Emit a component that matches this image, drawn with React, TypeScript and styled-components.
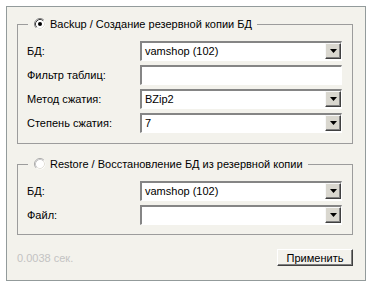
import React from 'react';
import styled, { createGlobalStyle } from 'styled-components';

const Global = createGlobalStyle`
  html, body { margin: 0; padding: 0; background: #ffffff; }
  body {
    font-family: "Liberation Sans", Arial, sans-serif;
    font-size: 11px;
    color: #000000;
  }
`;

const Panel = styled.div`
  box-sizing: border-box;
  margin: 6px;
  width: 360px;
  height: 275px;
  border: 1px solid #939b9b;
  background: #f3f2ec;
  padding: 17px 12px 0 10px;
  display: flex;
  flex-direction: column;
`;

const Group = styled.div<{ $gapTop?: number; $padBottom: number }>`
  position: relative;
  border: 1px solid #9c9c9c;
  margin-top: ${(p) => p.$gapTop ?? 0}px;
  padding: 16px 10px ${(p) => p.$padBottom}px 9px;
  display: flex;
  flex-direction: column;
  gap: 4px;
`;

const Legend = styled.div`
  position: absolute;
  top: -8px;
  left: 10px;
  height: 14px;
  padding: 0 5px 0 6px;
  background: #f3f2ec;
  display: flex;
  align-items: center;
  gap: 4px;
  line-height: 14px;
  white-space: nowrap;
`;

const Row = styled.div`
  display: grid;
  grid-template-columns: 113px 1fr;
  align-items: center;
  height: 20px;
`;

const Label = styled.span`
  white-space: nowrap;
`;

const Field = styled.div`
  box-sizing: border-box;
  height: 20px;
  background: #ffffff;
  border-style: solid;
  border-width: 2px 1px 1px 2px;
  border-color: #858585 #ffffff #ffffff #858585;
  display: flex;
  align-items: stretch;
`;

const FieldText = styled.span`
  flex: 1;
  padding-left: 3px;
  line-height: 17px;
  white-space: nowrap;
  overflow: hidden;
`;

const DropButton = styled.span`
  box-sizing: border-box;
  width: 16px;
  height: 16px;
  margin-bottom: 1px;
  background: #d9d7cf;
  border-style: solid;
  border-width: 1px;
  border-color: #f8f8f8 #404040 #404040 #f8f8f8;
  box-shadow: inset -1px -1px 0 #808080;
  display: flex;
  align-items: center;
  justify-content: center;
`;

const Footer = styled.div`
  margin-top: 14px;
  display: flex;
  justify-content: space-between;
  align-items: center;
  height: 17px;
`;

const Status = styled.span`
  color: #c3c3c3;
`;

const ApplyButton = styled.button`
  box-sizing: border-box;
  width: 76px;
  height: 17px;
  padding: 0;
  font: inherit;
  color: #000;
  background: #f3f2ec;
  border-style: solid;
  border-width: 1px;
  border-color: #ffffff #404040 #404040 #ffffff;
  box-shadow: inset -1px -1px 0 #808080;
  line-height: 14px;
`;

const Arrow = () => (
  <svg width="7" height="4" viewBox="0 0 7 4">
    <polygon points="0,0 7,0 3.5,4" fill="#000" />
  </svg>
);

const Radio = ({ checked }: { checked?: boolean }) => (
  <svg width="12" height="12" viewBox="0 0 12 12">
    <circle cx="6" cy="6" r="5.5" fill="#fff" />
    <path d="M2.11 9.89 A5.5 5.5 0 0 1 9.89 2.11" fill="none" stroke={checked ? '#808080' : '#a8a8a8'} strokeWidth="1" />
    <path d="M2.82 9.18 A4.5 4.5 0 0 1 9.18 2.82" fill="none" stroke={checked ? '#404040' : '#c8c8c8'} strokeWidth="1" />
    <path d="M9.18 2.82 A4.5 4.5 0 0 1 2.82 9.18" fill="none" stroke="#e4e2da" strokeWidth="1" />
    {checked && <circle cx="6" cy="6" r="2" fill="#000" />}
  </svg>
);

const Combo = ({ value }: { value?: string }) => (
  <Field>
    <FieldText>{value}</FieldText>
    <DropButton>
      <Arrow />
    </DropButton>
  </Field>
);

const TextBox = ({ value }: { value?: string }) => (
  <Field>
    <FieldText>{value}</FieldText>
  </Field>
);

export default function App() {
  return (
    <>
      <Global />
      <Panel>
        <Group $padBottom={10}>
          <Legend>
            <Radio checked />
            <span>Backup / Создание резервной копии БД</span>
          </Legend>
          <Row>
            <Label>БД:</Label>
            <Combo value="vamshop (102)" />
          </Row>
          <Row>
            <Label>Фильтр таблиц:</Label>
            <TextBox />
          </Row>
          <Row>
            <Label>Метод сжатия:</Label>
            <Combo value="BZip2" />
          </Row>
          <Row>
            <Label>Степень сжатия:</Label>
            <Combo value="7" />
          </Row>
        </Group>
        <Group $gapTop={20} $padBottom={9}>
          <Legend>
            <Radio />
            <span>Restore / Восстановление БД из резервной копии</span>
          </Legend>
          <Row>
            <Label>БД:</Label>
            <Combo value="vamshop (102)" />
          </Row>
          <Row>
            <Label>Файл:</Label>
            <Combo />
          </Row>
        </Group>
        <Footer>
          <Status>0.0038 сек.</Status>
          <ApplyButton>Применить</ApplyButton>
        </Footer>
      </Panel>
    </>
  );
}
